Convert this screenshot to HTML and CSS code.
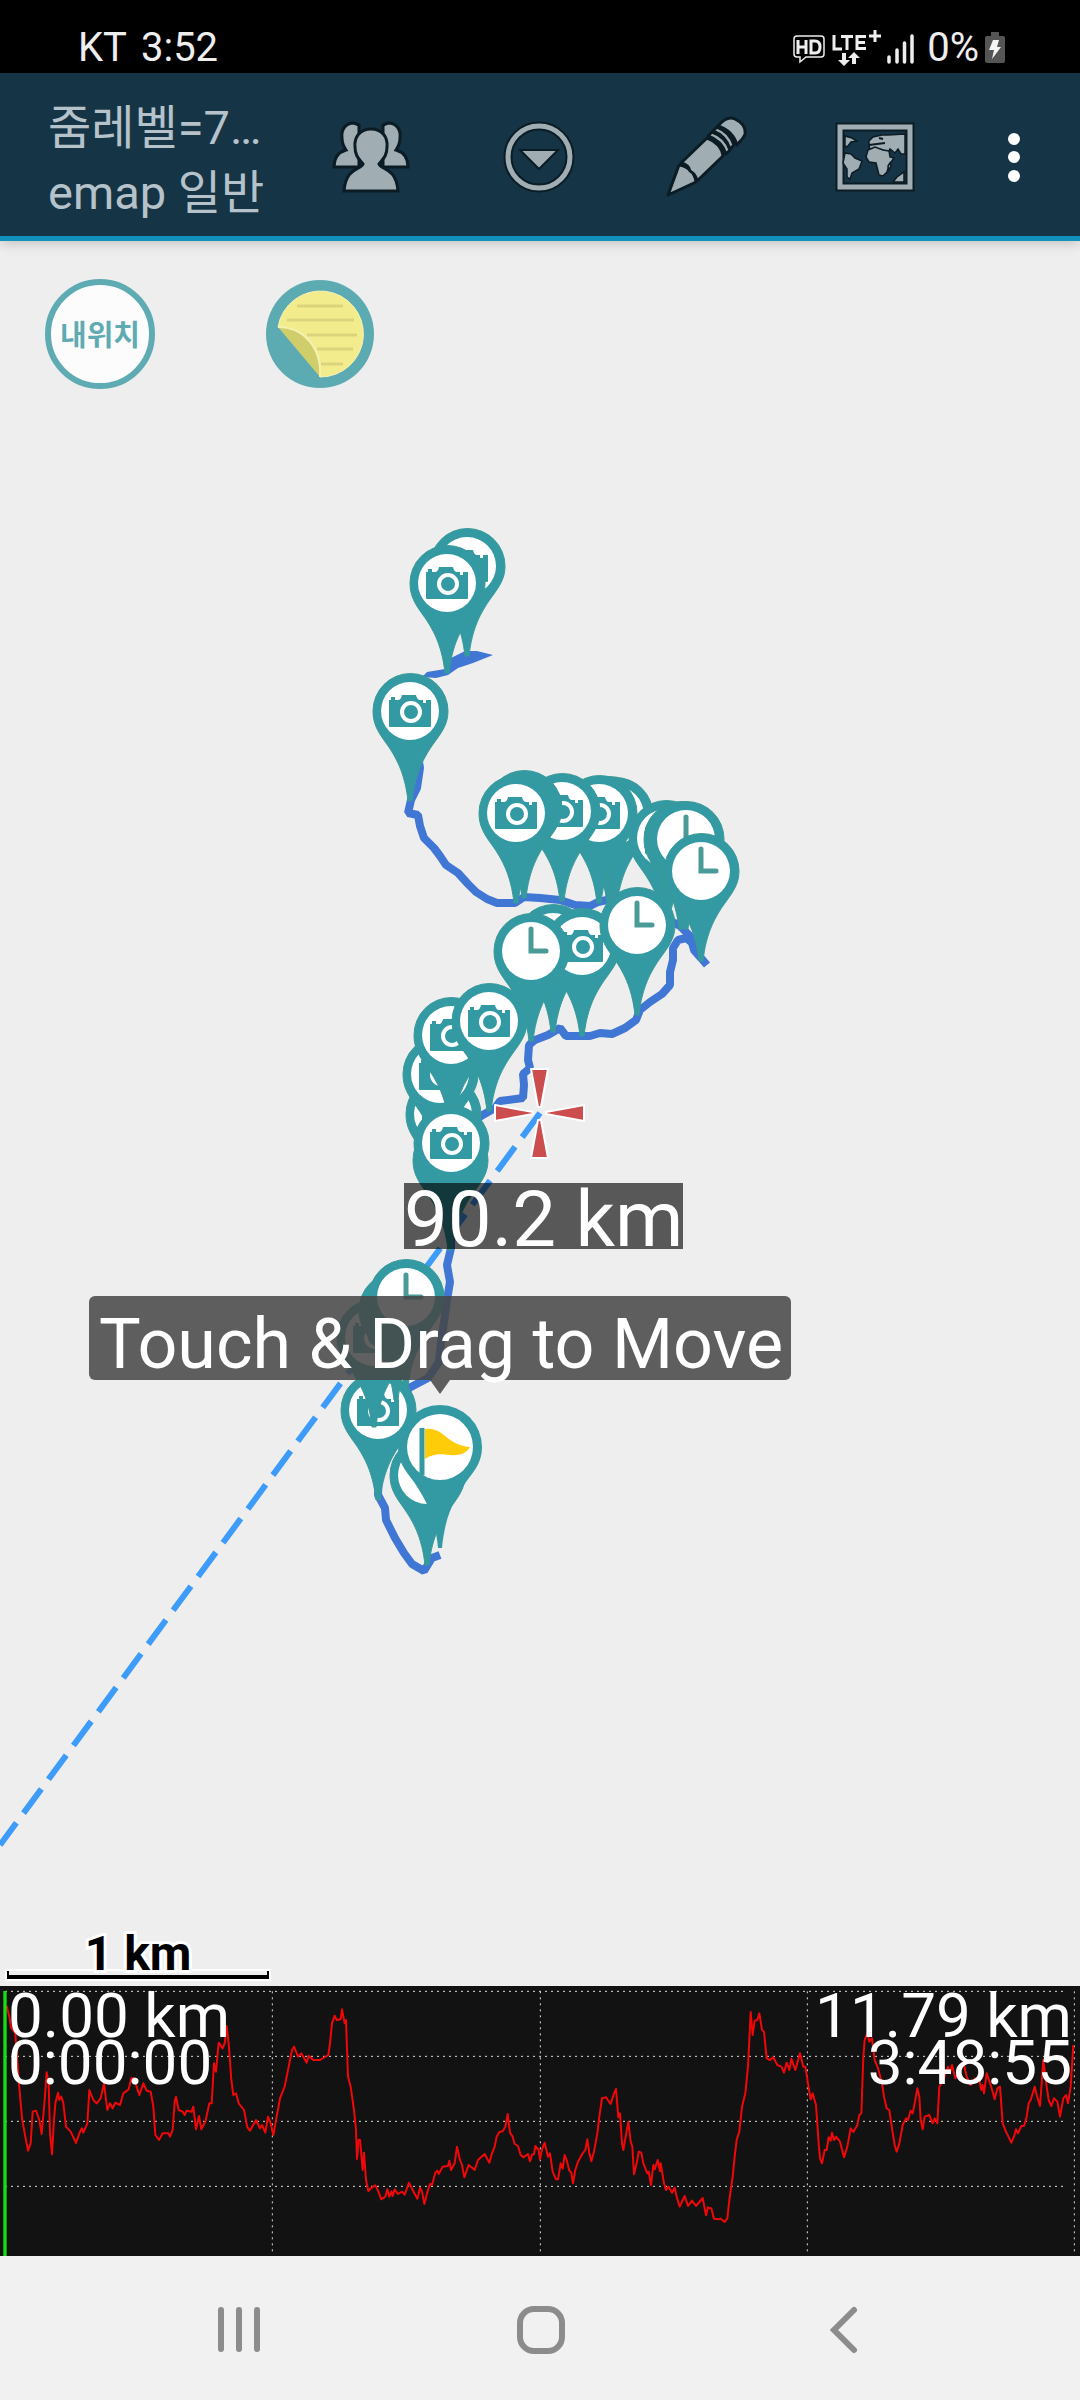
FILE: index.html
```html
<!DOCTYPE html>
<html lang="ko">
<head>
  <meta charset="UTF-8">
  <meta name="viewport" content="width=device-width, initial-scale=1.0">
  <title>emap</title>
  <link rel="stylesheet" href="styles.css">
</head>
<body>
  <div class="status-bar">
    <span class="carrier">KT</span>
    <span class="time">3:52</span>
    <svg class="status-icons" width="122" height="40" viewBox="794 25 122 40">
      <path d="M798 33h24q3 0 3 3v15q0 3-3 3h-15l-6 5v-5h-3q-3 0-3-3v-15q0-3 3-3z" fill="none" stroke="#eee" stroke-width="1.5"/>
      <path d="M799 37v14M807 37v14M799 44h8M812 38v12h4q5 0 5-6t-5-6z" fill="none" stroke="#eee" stroke-width="3"/>
      <path d="M835 32v14h8M842 33.500h12M848 33v14M867 33.500h-9v12h9M858 39.500h8M870 33h12M876 27v12" fill="none" stroke="#eee" stroke-width="3"/>
      <path d="M843 50h4v7h4l-6 6-6-6h4zM853 61h4v-6h4l-6-6-6 6h4z" fill="#eee"/>
      <path d="M890 54v5M898 47v12M905.500 40v19M913 33v26" stroke="#eee" stroke-width="3.500" stroke-linecap="round"/>
    </svg>
    <span class="battery-text">0%</span>
    <svg class="battery" width="20" height="32" viewBox="0 0 20 32">
      <path d="M6 0h8v4h4q2 0 2 2v23q0 2-2 2h-16q-2 0-2-2v-23q0-2 2-2h4z" fill="#555"/>
      <path d="M8 8h6l-2 7h4l-9 12 2-9h-5z" fill="#f4f4f4"/>
    </svg>
  </div>

  <header class="app-bar">
    <h1 class="title">줌레벨=7…<br>emap 일반</h1>
    <button class="tool" aria-label="Friends">
      <svg width="80" height="84" viewBox="331 115 80 84">
        <g fill="#a0adb3" stroke="#0b1c25" stroke-width="3">
          <path d="M354 123c-9 0-13 7-12 15 0 6 2 9 4 12-7 2-12 7-12 17h25v-42z"/>
          <path d="M388 123c9 0 13 7 12 15 0 6-2 9-4 12 7 2 12 7 12 17h-25v-42z"/>
          <path d="M371 129c-11 0-17 8-16 18 0 9 4 12 8 17-2 6-17 3-19 27h54c-2-24-17-21-19-27 4-5 8-8 8-17 1-10-5-18-16-18z"/>
        </g>
      </svg>
    </button>
    <button class="tool" aria-label="Drop down">
      <svg width="80" height="84" viewBox="499 115 80 84">
        <circle cx="539" cy="157" r="31" fill="none" stroke="#0b1c25" stroke-width="9"/>
        <circle cx="539" cy="157" r="31" fill="none" stroke="#a0adb3" stroke-width="5"/>
        <path d="M520 150h38l-19 19z" fill="#a0adb3" stroke="#0b1c25" stroke-width="2"/>
      </svg>
    </button>
    <button class="tool" aria-label="Edit">
      <svg width="84" height="84" viewBox="665 115 84 84">
        <g fill="#a0adb3" stroke="#0b1c25" stroke-width="3" stroke-linejoin="round">
          <path d="M668 195l11-30c8 1 16 7 17 17z"/>
          <path d="M681 163l26-25c9 3 15 10 16 18l-26 25c-1-6-3-8-7-10-1-5-4-7-9-8z"/>
          <path d="M708 136l4-4c9 3 15 9 18 18l-4 4c-3-9-9-15-18-18z"/>
          <path d="M713 131l4-4c8 3 14 9 17 18l-4 4c-3-9-9-15-17-18z"/>
          <path d="M718 126c5-6 11-10 17-7 6 3 11 8 10 15-1 4-5 7-8 11-3-10-10-16-19-19z"/>
        </g>
      </svg>
    </button>
    <button class="tool" aria-label="Map type">
      <svg width="80" height="84" viewBox="836 115 80 84">
        <rect x="841" y="127" width="70" height="60" fill="none" stroke="#0b1c25" stroke-width="9"/>
        <rect x="841" y="127" width="70" height="60" fill="none" stroke="#a0adb3" stroke-width="5"/>
        <g fill="#a0adb3" stroke="#0b1c25" stroke-width="1.500">
          <path d="M846 136l7 2 5 3-6 1-3 4-3 1zM846 153l6 1 4 4 7 3-3 8-7 4-2 6-3-2 0-8-4-6z"/>
          <path d="M870 141l4-4 9-2 6 0 17-1v20l-4 0-3-5-3 4-5-4-3 6-4-5-5-1-8 1-1-5z"/>
          <path d="M869 150l7-3 8 3 6 1 1 6 4 1-5 7-2 7-4 4-4-1-3-12-7-1-3-5z"/>
          <path d="M894 182l4-5 7-5v10zM889 166l2-3 1 3-2 4z"/>
        </g>
        <path d="M870 145l8-1 8-1M880 138l4 1" stroke="#0b1c25" fill="none" stroke-width="2"/>
      </svg>
    </button>
    <button class="more" aria-label="More options">
      <svg width="14" height="50" viewBox="0 0 14 50" fill="#fff">
        <circle cx="7" cy="7" r="6"/>
        <circle cx="7" cy="25" r="6"/>
        <circle cx="7" cy="44" r="6"/>
      </svg>
    </button>
  </header>

  <main class="map">
    <svg class="map-canvas" viewBox="0 241 1080 1745">
      <defs>
        <path id="drop" d="M-2 0C-5 -28 -14 -44 -24 -58C-32 -69 -37 -77 -37 -90A37 37 0 0 1 38 -90C38 -77 32 -69 24 -58C14 -44 5 -28 2 0Z" fill="#3399a2" stroke="#3a9a98" stroke-width="1"/>
        <g id="camera">
          <use href="#drop"/>
          <circle cy="-90" r="29" fill="#fff"/>
          <path d="M-21 -101h2v-3h4v3h3q3 0 4-5h14q1 5 4 5h11v26q0 1-1 1h-40q-1 0-1-1z" fill="#3399a2"/>
          <circle cx="1" cy="-89" r="9" fill="#3399a2" stroke="#fff" stroke-width="4"/>
          <rect x="13" y="-101" width="3" height="3" fill="#fff"/>
        </g>
        <g id="clock">
          <use href="#drop"/>
          <circle cy="-90" r="29" fill="#fff"/>
          <path d="M0 -112v22h15" fill="none" stroke="#4a9a98" stroke-width="5" stroke-linecap="round"/>
        </g>
      </defs>

      <!-- recorded track -->
      <g class="track">
        <path class="track-tip" d="M493 655l-16-4-12 0-14 7-6 11-18 3-5 5 14 1 12-3 10-7 15-5z"/>
        <polyline points="424,678 412,720 420,768 417,788 411,800 408,813 418,815 420,826 424,838 434,848 440,856 446,865 458,873 468,884 476,892 487,899 497,903 515,903 524,897 540,898 560,900 575,905 590,906 598,902 607,900 625,905 660,915 680,926 690,936 694,950 701,958 707,965"/>
        <polyline points="694,944 686,938 678,940 673,948 673,960 670,972 670,985 662,994 650,1002 640,1010 636,1020 625,1028 612,1034 600,1033 590,1036 566,1036 560,1028 548,1035 535,1040 529,1045 528,1060 530,1068 523,1074 524,1085 523,1098 500,1101 495,1108 481,1116 460,1132 446,1200 451,1236 451,1248 447,1265 450,1282 447,1300 444,1322 441,1342 439,1362 428,1378 409,1388 380,1440 378,1495 385,1508 386,1520 395,1538 404,1553 412,1564 424,1571 432,1558 440,1555"/>
      </g>

      <line class="guide" x1="540" y1="1113" x2="0" y2="1845"/>

      <g>
        <use href="#camera" x="467" y="656"/>
        <use href="#camera" x="447" y="673"/>
        <use href="#camera" x="410" y="801"/>
        <use href="#camera" x="609" y="904"/>
        <use href="#camera" x="615" y="905"/>
        <use href="#camera" x="599" y="903"/>
        <use href="#camera" x="562" y="901"/>
        <use href="#drop" x="524" y="898"/>
        <use href="#camera" x="516" y="903"/>
        <use href="#camera" x="666" y="928"/>
        <use href="#clock" x="681" y="929"/>
        <use href="#clock" x="686" y="929"/>
        <use href="#clock" x="701" y="961"/>
        <use href="#camera" x="553" y="1032"/>
        <use href="#camera" x="582" y="1036"/>
        <use href="#clock" x="637" y="1015"/>
        <use href="#clock" x="531" y="1041"/>
        <use href="#camera" x="443" y="1204"/>
        <use href="#camera" x="440" y="1164"/>
        <use href="#camera" x="451" y="1125"/>
        <use href="#camera" x="489" y="1111"/>
        <use href="#drop" x="450" y="1250"/>
        <use href="#camera" x="451" y="1233"/>
        <use href="#camera" x="378" y="1500"/>
        <use href="#camera" x="374" y="1427"/>
        <use href="#drop" x="396" y="1400"/>
        <use href="#clock" x="406" y="1387"/>
        <use href="#clock" x="427" y="1565"/>
      </g>

      <!-- start point -->
      <g transform="translate(440 1548)">
        <path d="M-2 0C-5 -32 -14 -48 -26 -66C-36 -79 -42 -87 -42 -101A42 42 0 0 1 42 -101C42 -87 36 -79 26 -66C14 -48 5 -32 2 0Z" fill="#3399a2"/>
        <circle cy="-101" r="33" fill="#fff"/>
        <path d="M-18 -120v47" stroke="#3399a2" stroke-width="5"/>
        <path d="M-15 -119c20-2 20 16 45 18-8 14-26 5-36 8q-5 1-9 4z" fill="#ffcc0a"/>
      </g>

      <g fill="#cc4d4d" stroke="#fff" stroke-width="2" stroke-linejoin="round">
        <path d="M531 1069h17l-7 38h-3zM531 1158h17l-7-38h-3zM495 1105v16l38-7v-2zM584 1105v16l-38-7v-2z"/>
      </g>
    </svg>

    <button class="my-location">내위치</button>
    <button class="memo" aria-label="Memo">
      <svg width="110" height="110" viewBox="0 0 110 110">
        <circle cx="55" cy="55" r="54" fill="#5caab2"/>
        <path d="M13 48A43 43 0 1 1 55 98C56 70 44 48 13 48z" fill="#f3ec8c" stroke="#f7f3b8" stroke-width="1"/>
        <path d="M32 27h46M22 41h67M42 56h50M52 70h36M56 85h22" stroke="#dcd47c" stroke-width="3"/>
        <path d="M13 48C38 48 57 68 55 98z" fill="#cfce6a"/>
        <path d="M13 48C38 48 57 68 55 98" fill="none" stroke="#f5f1b0" stroke-width="2"/>
      </svg>
    </button>

    <div class="distance">90.2 km</div>
    <div class="tooltip">Touch &amp; Drag to Move</div>
    <div class="scale">
      <span class="scale-text">1 km</span>
      <span class="scale-line"></span>
    </div>
  </main>

  <section class="profile">
    <svg class="profile-chart" viewBox="0 0 3240 810" preserveAspectRatio="none">
      <g class="grid">
        <path d="M15 16H3192M15 211H3192M15 406H3192M15 601H3192"/>
        <path d="M817 16V800M1621 16V800M2422 16V800M3223 16V800"/>
      </g>
      <g class="altitude">
        <polyline transform="translate(0 -198)" points="20,258 28,290 33,322 46,340 50,400 56,480 66,595 74,640 84,692 92,670 98,575 108,572 118,600 125,642 134,540 140,457 146,490 150,640 156,703 162,600 166,550 174,518 178,540 184,530 190,550 198,620 212,635 228,669 240,635 246,625 250,638 262,610 268,510 280,540 290,550 302,535 312,490 322,570 330,550 338,565 346,548 354,552 360,555 370,520 386,508 394,475 402,475 418,525 430,490 440,512 452,515 460,560 466,645 477,660 488,640 505,640 510,650 518,630 524,545 528,530 536,570 548,575 554,585 560,572 575,575 580,560 588,628 597,588 604,628 616,605 628,550 635,550 642,430 648,455 656,368 668,385 674,370 680,318 686,370 694,480 700,525 708,520 716,550 732,570 742,622 750,632 768,600 780,625 786,615 796,638 804,590 812,610 820,645 830,590 840,535 854,500 868,430 876,390 882,380 894,410 904,400 920,428 926,407 940,420 960,420 985,405 990,370 996,310 1004,287 1010,300 1022,298 1026,268 1034,310 1038,300 1044,470 1052,500 1062,570 1068,630 1071,717 1076,660 1080,658"/>
        <polyline transform="translate(1080 -48)" points="0,508 8,600 12,548 18,630 25,663 36,652 46,646 54,662 64,688 76,680 82,658 88,680 94,664 98,678 104,658 114,672 126,665 134,674 147,638 158,660 172,686 180,653 186,665 193,702 204,660 210,642 216,645 226,608 232,602 236,612 248,590 264,588 268,572 273,600 284,580 291,530 300,570 306,585 313,622 326,585 344,600 354,570 374,552 388,578 396,550 404,530 410,500 418,486 428,484 436,470 443,432 450,488 458,500 464,522 474,528 482,555 490,562 504,552 510,574 516,555 522,552 526,528 536,540 540,568 546,538 554,518 564,560 570,550 578,605 588,628 594,628 602,580 608,596 614,555 620,570 628,602 634,608 639,640 646,600 654,575 668,550 676,540 682,508 688,550 694,574 702,545 712,490 718,440 726,385 738,382 752,402 762,370 768,357 775,442 780,430 786,520 790,540 796,505 805,455 812,515 817,530 822,613 830,580 836,545 844,548 850,580 862,610 866,605 873,645 880,585 884,598 893,570 900,604 902,580 912,640 918,660 926,650 936,668 944,653 950,680 959,710 974,678 984,708 996,692 1008,708 1028,684 1038,736 1044,712 1054,715 1062,746 1080,748"/>
        <polyline transform="translate(2160 -48)" points="0,745 14,756 22,745 28,690 38,620 44,560 50,510 58,485 66,410 76,370 84,290 92,126 98,195 104,152 112,150 118,130 126,180 132,185 140,265 150,270 160,262 172,285 184,290 192,308 200,278 208,300 214,266 226,300 240,250 250,290 256,290 264,340 272,388 278,370 288,405 296,520 300,565 306,580 314,540 320,540 326,502 332,512 336,488 342,510 348,500 360,515 372,562 382,530 392,475 400,486 412,465 418,435 424,430 430,260 434,210 442,190 448,215 456,205 464,270 474,295 486,340 492,380 500,415 508,420 516,475 524,525 530,545 538,520 548,465 558,445 564,450 572,422 578,430 584,400 592,355 598,380 602,450 608,478 614,440 628,435 638,460 644,445 652,460 658,350 670,330 684,290 690,310 696,285 706,325 716,310 730,275 740,320 752,345 765,325 778,330 784,360 788,345 792,370 800,310 812,345 824,388 832,355 840,350 848,460 858,485 874,518 882,500 888,478 894,490 904,468 912,468 920,440 926,400 932,390 944,350 950,375 960,408 970,270 980,350 986,390 994,408 1002,385 1012,395 1020,440 1030,385 1038,375 1044,400 1052,350 1060,225"/>
      </g>
      <path class="cursor" d="M15 15V810"/>
    </svg>
    <div class="profile-text">
      <div>0.00 km<br>0:00:00</div>
      <div class="total">11.79 km<br>3:48:55</div>
    </div>
  </section>

  <nav class="nav-bar">
    <button aria-label="Recent apps">
      <svg width="48" height="50" viewBox="0 0 48 50"><path d="M6 5v39M24 5v39M42 5v39"/></svg>
    </button>
    <button aria-label="Home">
      <svg width="50" height="50" viewBox="0 0 50 50"><rect x="4" y="4" width="42" height="42" rx="14"/></svg>
    </button>
    <button aria-label="Back">
      <svg width="50" height="50" viewBox="0 0 50 50"><path d="M36 5l-20 20 20 20"/></svg>
    </button>
  </nav>
</body>
</html>
```
FILE: styles.css
```css
* {
  box-sizing: border-box;
}

body {
  margin: 0;
  min-height: 100vh;
  display: flex;
  flex-direction: column;
  font-family: Roboto, "Noto Sans CJK KR", sans-serif;
  background-color: #eeeeee;
}

button {
  display: flex;
  justify-content: center;
  align-items: center;
  padding: 0;
  border: none;
  background: none;
  font-family: inherit;
  cursor: pointer;
}

/* status bar */
.status-bar {
  display: flex;
  align-items: center;
  height: 73px;
  padding: 22px 75px 0 78px;
  background-color: #000000;
  color: #eeeeee;
  font-size: 40px;
}

.time {
  margin-left: 14px;
}

.status-icons {
  margin-left: auto;
}

.battery-text {
  margin: 0 6px 0 12px;
}

/* app bar */
.app-bar {
  display: flex;
  align-items: stretch;
  height: 168px;
  padding: 4px 12px 0 48px;
  background-color: #153445;
  border-bottom: 5px solid #1391bd;
  box-shadow: 0 2px 12px rgba(0, 0, 0, 0.2);
  position: relative;
  z-index: 1;
}

.title {
  flex: 1;
  margin: 0;
  padding-top: 18px;
  color: #b6c2c9;
  font-size: 47px;
  font-weight: 400;
  line-height: 65px;
  white-space: nowrap;
}

.tool {
  width: 168px;
}

.more {
  width: 109px;
}

/* map */
.map {
  flex: 1;
  position: relative;
  overflow: hidden;
}

.map-canvas {
  position: absolute;
  width: 100%;
  height: 100%;
}

.track polyline {
  fill: none;
  stroke: #4076d4;
  stroke-width: 8;
  stroke-linejoin: bevel;
}

.track-tip {
  fill: #4076d4;
}

.guide {
  stroke: #3d9bf9;
  stroke-width: 6;
  stroke-dasharray: 30 12;
}

.my-location,
.memo {
  position: absolute;
  top: 38px;
  width: 110px;
  height: 110px;
  border-radius: 50%;
}

.my-location {
  left: 45px;
  padding-bottom: 3px;
  border: 6px solid #5fabb3;
  background-color: #fcfcfc;
  color: #5fabb3;
  font-size: 29px;
  font-weight: 700;
  white-space: nowrap;
}

.memo {
  left: 265px;
}

.distance {
  position: absolute;
  left: 404px;
  top: 942px;
  height: 66px;
  background-color: rgba(0, 0, 0, 0.63);
  color: #ffffff;
  font-size: 78px;
  line-height: 74px;
  white-space: nowrap;
}

.tooltip {
  position: absolute;
  left: 89px;
  top: 1055px;
  height: 84px;
  padding: 4px 8px 0 10px;
  border-radius: 6px;
  background-color: rgba(70, 70, 70, 0.86);
  color: #ffffff;
  font-size: 70px;
  line-height: 88px;
  white-space: nowrap;
}

.tooltip::after {
  content: "";
  position: absolute;
  left: 50%;
  top: 100%;
  margin-left: -10px;
  border: 10px solid transparent;
  border-top: 14px solid rgba(70, 70, 70, 0.86);
  border-bottom: none;
}

.scale {
  position: absolute;
  left: 7px;
  bottom: 7px;
  width: 262px;
  text-align: center;
}

.scale-text {
  display: block;
  color: #000000;
  font-size: 48px;
  font-weight: 700;
  line-height: 34px;
  -webkit-text-stroke: 6px #ffffff;
  paint-order: stroke fill;
}

.scale-line {
  display: block;
  height: 8px;
  border: 2px solid #000000;
  border-top: none;
  border-bottom-width: 4px;
  box-shadow: 0 0 0 2px #ffffff;
}

/* altitude profile */
.profile {
  position: relative;
  height: 270px;
  background-color: #121212;
}

.profile-chart {
  display: block;
  width: 100%;
  height: 100%;
}

.grid path {
  stroke: #dddddd;
  stroke-width: 3;
  stroke-dasharray: 6 12;
}

.altitude polyline {
  fill: none;
  stroke: #f00808;
  stroke-width: 6;
  stroke-linejoin: round;
}

.cursor {
  stroke: #14e014;
  stroke-width: 10;
}

.profile-text {
  position: absolute;
  top: 6px;
  left: 8px;
  right: 8px;
  display: flex;
  justify-content: space-between;
  color: #ffffff;
  font-size: 62px;
  line-height: 47px;
}

.total {
  text-align: right;
}

/* navigation bar */
.nav-bar {
  display: flex;
  justify-content: center;
  height: 144px;
  padding: 4px 0 0 2px;
  background-color: #f1f1f1;
}

.nav-bar button {
  width: 302px;
}

.nav-bar svg {
  fill: none;
  stroke: #8c8c8c;
  stroke-width: 6;
  stroke-linecap: round;
}
```
